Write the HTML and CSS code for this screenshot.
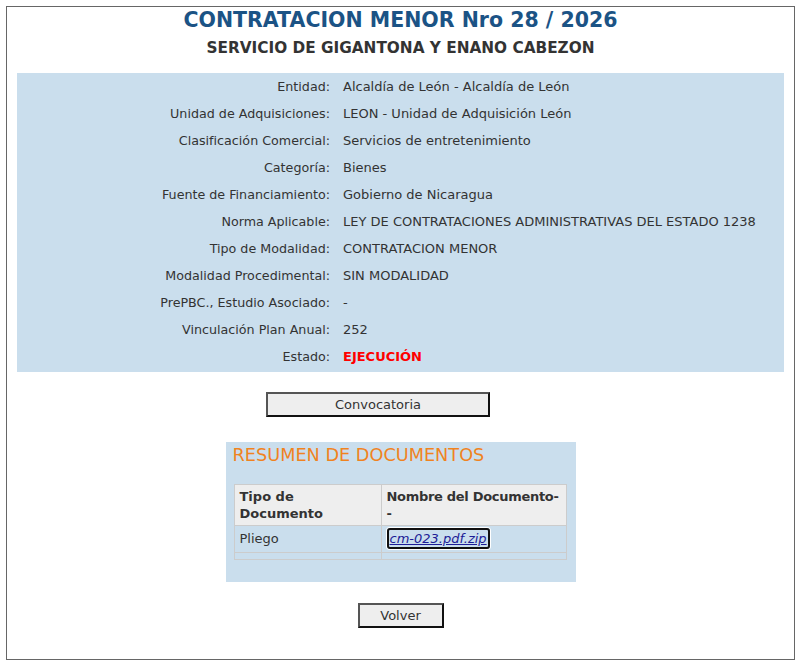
FILE: index.html
```html
<!DOCTYPE html>
<html lang="es">
  <head>
    <meta charset="UTF-8" />
    <title>Contratacion Menor Nro 28 / 2026</title>
    <link rel="stylesheet" href="styles.css">
  </head>
  <body>
    <div class="page">
      <h1 class="title">CONTRATACION MENOR Nro 28 / 2026</h1>
      <h2 class="subtitle">SERVICIO DE GIGANTONA Y ENANO CABEZON</h2>

      <!-- Datos generales del proceso -->
      <div class="info">
        <div class="label">Entidad:</div>
        <div class="value">Alcaldía de León - Alcaldía de León</div>
        <div class="label">Unidad de Adquisiciones:</div>
        <div class="value">LEON - Unidad de Adquisición León</div>
        <div class="label">Clasificación Comercial:</div>
        <div class="value">Servicios de entretenimiento</div>
        <div class="label">Categoría:</div>
        <div class="value">Bienes</div>
        <div class="label">Fuente de Financiamiento:</div>
        <div class="value">Gobierno de Nicaragua</div>
        <div class="label">Norma Aplicable:</div>
        <div class="value">LEY DE CONTRATACIONES ADMINISTRATIVAS DEL ESTADO 1238</div>
        <div class="label">Tipo de Modalidad:</div>
        <div class="value">CONTRATACION MENOR</div>
        <div class="label">Modalidad Procedimental:</div>
        <div class="value">SIN MODALIDAD</div>
        <div class="label">PrePBC., Estudio Asociado:</div>
        <div class="value">-</div>
        <div class="label">Vinculación Plan Anual:</div>
        <div class="value">252</div>
        <div class="label">Estado:</div>
        <div class="value estado">EJECUCIÓN</div>
      </div>

      <div class="actions">
        <button class="btn btn-conv">Convocatoria</button>
      </div>

      <div class="resumen">
        <h3>RESUMEN DE DOCUMENTOS</h3>
        <table class="docs">
          <tr>
            <th class="col-tipo">Tipo de Documento</th>
            <th class="col-nombre">Nombre del Documento--</th>
          </tr>
          <tr>
            <td>Pliego</td>
            <td><a href="#" class="doc-link">cm-023.pdf.zip</a></td>
          </tr>
          <tr class="empty">
            <td></td>
            <td></td>
          </tr>
        </table>
      </div>

      <div class="volver">
        <button class="btn btn-volver">Volver</button>
      </div>
    </div>
  </body>
</html>
```

FILE: styles.css
```css
* {
  margin: 0;
  padding: 0;
  box-sizing: border-box;
}

body {
  margin: 6px 12px 0 6px;
  font-family: "DejaVu Sans", sans-serif;
  font-size: 13px;
  color: #333;
  background: #fff;
}

.page {
  border: 1px solid #666;
  height: 654px;
  padding: 0 10px;
}

.title {
  text-align: center;
  font-size: 20.5px;
  color: #1b5385;
  line-height: 26px;
}

.subtitle {
  text-align: center;
  font-size: 15.3px;
  color: #333;
  line-height: 18px;
  margin-top: 6px;
}

/* panel azul con los datos */
.info {
  margin-top: 16px;
  background: #cadeed;
  display: grid;
  grid-template-columns: 313px 1fr;
  padding: 0 0 2px;
}

.info .label,
.info .value {
  height: 27px;
  line-height: 27px;
}

.info .label {
  text-align: right;
  font-size: 12.7px;
}

.info .value {
  padding-left: 13px;
}

.info .estado {
  color: #f00;
  font-weight: bold;
}

.actions {
  margin-top: 20px;
  padding-left: 249px;
}

.btn {
  font-family: "DejaVu Sans", sans-serif;
  font-size: 13px;
  color: #333;
  background: #eee;
  border: 2px solid;
  border-color: #555 #111 #111 #555;
  height: 25px;
}

.btn-conv {
  width: 224px;
}

.resumen {
  width: 350px;
  margin: 25px auto 0;
  background: #cadeed;
  padding: 2px 9px 23px 8px;
  height: 140px;
}

.resumen h3 {
  font-weight: normal;
  font-size: 17.7px;
  color: #f0831f;
  line-height: 22px;
  margin-left: -1px;
}

.docs {
  margin-top: 18px;
  width: 333px;
  border-collapse: collapse;
}

.docs th,
.docs td {
  border: 1px solid #ccc;
  text-align: left;
  vertical-align: top;
  padding: 0 5px;
}

.docs th {
  background: #eee;
  font-weight: bold;
  line-height: 17px;
  padding-top: 3px;
  padding-bottom: 3px;
}

.docs .col-tipo {
  width: 147px;
}

.docs .col-nombre {
  letter-spacing: -0.3px;
  padding-right: 2px;
}

.docs td {
  height: 27px;
  line-height: 25px;
}

.docs .empty td {
  height: 7px;
}

.doc-link {
  color: #1c1c96;
  font-style: italic;
  display: inline-block;
  line-height: 17px;
  padding: 0 1px;
  border: 2px solid #111;
  border-radius: 3px;
  box-shadow: 0 0 0 1px #fff;
}

.volver {
  text-align: center;
  margin-top: 21px;
}

.btn-volver {
  width: 86px;
}
```
